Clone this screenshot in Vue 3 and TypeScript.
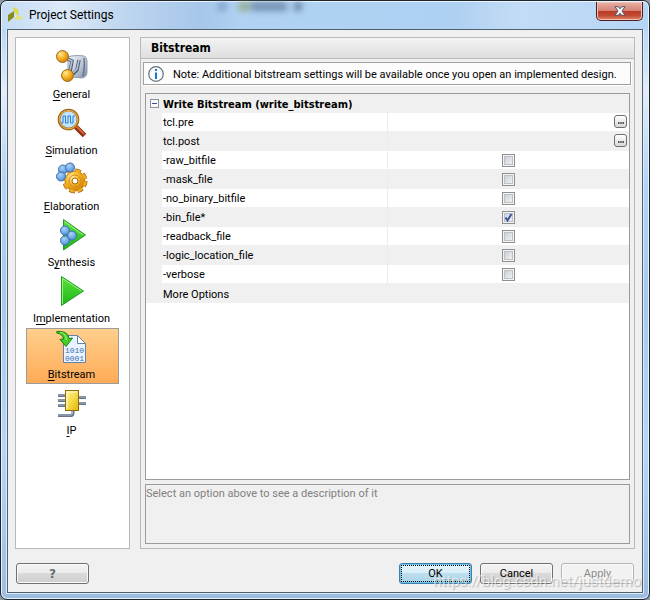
<script setup lang="ts">
import { ref } from 'vue'

interface NavItem {
  id: string
  before: string
  key: string
  after: string
}

interface Option {
  name: string
  kind: 'script' | 'flag' | 'text'
  value: boolean
}

const navItems: NavItem[] = [
  { id: 'general', before: '', key: 'G', after: 'eneral' },
  { id: 'simulation', before: '', key: 'S', after: 'imulation' },
  { id: 'elaboration', before: '', key: 'E', after: 'laboration' },
  { id: 'synthesis', before: 'S', key: 'y', after: 'nthesis' },
  { id: 'implementation', before: 'I', key: 'm', after: 'plementation' },
  { id: 'bitstream', before: '', key: 'B', after: 'itstream' },
  { id: 'ip', before: '', key: 'I', after: 'P' },
]

const active = ref('bitstream')
const expanded = ref(true)

const options = ref<Option[]>([
  { name: 'tcl.pre', kind: 'script', value: false },
  { name: 'tcl.post', kind: 'script', value: false },
  { name: '-raw_bitfile', kind: 'flag', value: false },
  { name: '-mask_file', kind: 'flag', value: false },
  { name: '-no_binary_bitfile', kind: 'flag', value: false },
  { name: '-bin_file*', kind: 'flag', value: true },
  { name: '-readback_file', kind: 'flag', value: false },
  { name: '-logic_location_file', kind: 'flag', value: false },
  { name: '-verbose', kind: 'flag', value: false },
  { name: 'More Options', kind: 'text', value: false },
])
</script>

<template>
  <div class="window">
    <header class="titlebar">
      <svg class="app-icon" viewBox="0 0 16 16" aria-hidden="true">
        <path d="M4 0 L10 2 L11 9 L7 6 Z" fill="#d9dc4a" />
        <path d="M0 8 L6 4 L6 10 L0 15 Z" fill="#8a8a1c" />
        <path d="M6 12 L10 8 L16 11 L11 13 Z" fill="#e4e37a" />
      </svg>
      <h1 class="title">Project Settings</h1>
      <span class="ghost" aria-hidden="true"></span>
      <button class="close" type="button" aria-label="Close">
        <svg viewBox="0 0 12 10" aria-hidden="true">
          <path d="M1 .7H4.3L6 2.8L7.7 .7H11L8 5L11 9.3H7.7L6 7.2L4.3 9.3H1L4 5Z" fill="#f6f6f6" stroke="#54546a" stroke-width="1" stroke-linejoin="round" />
        </svg>
      </button>
    </header>

    <div class="client">
      <div class="body">
        <nav class="sidebar">
          <button
            v-for="item in navItems"
            :key="item.id"
            type="button"
            class="nav-item"
            :class="{ selected: item.id === active }"
            @click="active = item.id"
          >
            <svg class="nav-icon" viewBox="0 0 32 32" aria-hidden="true">
              <defs>
                <radialGradient id="gold" cx=".35" cy=".3" r=".75">
                  <stop offset="0" stop-color="#ffeaa0" />
                  <stop offset=".45" stop-color="#f8b829" />
                  <stop offset="1" stop-color="#cf7c08" />
                </radialGradient>
                <radialGradient id="blue" cx=".4" cy=".3" r=".75">
                  <stop offset="0" stop-color="#a9d4fb" />
                  <stop offset="1" stop-color="#4f8cdc" />
                </radialGradient>
                <linearGradient id="green" x1="0" y1="0" x2="0" y2="1">
                  <stop offset="0" stop-color="#5be33a" />
                  <stop offset="1" stop-color="#1eb41a" />
                </linearGradient>
                <linearGradient id="steel" x1="0" y1="0" x2="1" y2="1">
                  <stop offset="0" stop-color="#f4f7fa" />
                  <stop offset=".6" stop-color="#b9c3d2" />
                  <stop offset="1" stop-color="#77859b" />
                </linearGradient>
                <linearGradient id="chip" x1="0" y1="0" x2="1" y2="1">
                  <stop offset="0" stop-color="#fff6a0" />
                  <stop offset=".5" stop-color="#f6d94a" />
                  <stop offset="1" stop-color="#e3b400" />
                </linearGradient>
              </defs>

              <g v-if="item.id === 'general'">
                <path d="M15 6Q23 5 28 6Q31 7 31 11V22Q31 27 26 28L17 27Q12 25 12 22V9Q12 6 15 6Z" fill="url(#steel)" stroke="#8e9bb0" />
                <path d="M28 8Q29 16 27 26" fill="none" stroke="#66758e" stroke-width="1.5" />
                <path d="M10 8L16 11L14 22M17 24L21 20L23 10" fill="none" stroke="#52617a" stroke-width="3.5" />
                <path d="M10 8L16 11L14 20M17 23L21 19L23 10" fill="none" stroke="#b7c3d4" stroke-width="1.5" />
                <circle cx="6.500" cy="6.500" r="6" fill="url(#gold)" stroke="#9c6a23" />
                <circle cx="11.500" cy="25.500" r="6" fill="url(#gold)" stroke="#9c6a23" />
              </g>
              <g v-else-if="item.id === 'simulation'">
                <path d="M20 21L28.500 29.500" stroke="#8c2c12" stroke-width="5" />
                <path d="M20 20L28 28" stroke="#d9643a" stroke-width="2" />
                <circle cx="12.500" cy="13.500" r="9.500" fill="#bfe4fd" stroke="#96601d" stroke-width="2.600" />
                <circle cx="12.500" cy="13.500" r="9.200" fill="none" stroke="#e8a63e" stroke-width="1.200" />
                <path d="M5 17H7V10H9.500V17H12V10H14.500V17H17V10H19" fill="none" stroke="#2d7fcd" stroke-width="1" />
              </g>
              <g v-else-if="item.id === 'elaboration'">
                <circle cx="19" cy="19" r="10.500" fill="none" stroke="#a86508" stroke-width="4" stroke-dasharray="5.500 2.750" />
                <circle cx="19" cy="19" r="10" fill="url(#gold)" stroke="#bd790b" />
                <circle cx="19" cy="19" r="10.500" fill="none" stroke="#f0ad22" stroke-width="2.500" stroke-dasharray="4.900 3.350" stroke-dashoffset="-.3" />
                <circle cx="19" cy="19" r="6" fill="none" stroke="#d58a0a" />
                <circle cx="19" cy="19" r="3" fill="#fff" stroke="#a86508" />
                <circle cx="7" cy="7.500" r="4.500" fill="url(#blue)" stroke="#416fa8" />
                <circle cx="14" cy="5.500" r="4.500" fill="url(#blue)" stroke="#416fa8" />
                <circle cx="5" cy="14.500" r="4.500" fill="url(#blue)" stroke="#416fa8" />
              </g>
              <g v-else-if="item.id === 'synthesis'">
                <path d="M7.500 1.500L29.500 17L7.500 32Z" fill="url(#green)" stroke="#239b24" stroke-linejoin="round" />
                <path d="M8.500 3.500L27 17" stroke="#a7f08e" />
                <circle cx="9" cy="12.500" r="4.500" fill="url(#blue)" stroke="#3971ad" />
                <circle cx="16" cy="17.500" r="4.500" fill="url(#blue)" stroke="#3971ad" />
                <circle cx="9" cy="22.500" r="4.500" fill="url(#blue)" stroke="#3971ad" />
              </g>
              <g v-else-if="item.id === 'implementation'">
                <path d="M5.500 2.500L27.500 17L5.500 31.500Z" fill="url(#green)" stroke="#239b24" stroke-linejoin="round" />
                <path d="M6.500 30V4.500L25.500 17" fill="none" stroke="#95f078" />
              </g>
              <g v-else-if="item.id === 'bitstream'">
                <path d="M7.500 5.500H21L29.500 14V32.500H7.500Z" fill="#e8f4ff" stroke="#6482ab" />
                <path d="M21.500 5.500V13.500H29.500Z" fill="#fff" stroke="#6482ab" />
                <text class="bits" x="18.500" y="23" text-anchor="middle">1010</text>
                <text class="bits" x="18.500" y="31" text-anchor="middle">0001</text>
                <path d="M.8 1.500Q12 .5 13 8.500L16.500 8L10 16.500L4 9.500L7.500 9Q7 4 .8 3Z" fill="#42cf26" stroke="#197c15" stroke-linejoin="round" />
                <path d="M4 2.300Q10 3 10.500 10" fill="none" stroke="#aef58a" />
              </g>
              <g v-else>
                <path d="M2 9.500H10M2 14.500H10M2 19.500H10M22 11.500H30M22 17.500H30M2 29.500H15Q17 29.500 17 27V24" fill="none" stroke="#65758a" stroke-width="3" />
                <path d="M2 9H10M2 14H10M2 19H10M22 11H30M22 17H30M2 29H15Q16.500 29 16.500 27V24" fill="none" stroke="#a9b7c7" />
                <rect x="9.500" y="4.500" width="13" height="20" fill="url(#chip)" stroke="#8e6a0a" />
                <path d="M11 23V6H21" fill="none" stroke="#fffbd0" />
              </g>
            </svg>
            <span class="nav-label">{{ item.before }}<u>{{ item.key }}</u>{{ item.after }}</span>
          </button>
        </nav>

        <main class="panel">
          <h2 class="panel-title">Bitstream</h2>
          <p class="note">
            <svg class="info" viewBox="0 0 16 16" aria-hidden="true">
              <circle cx="8" cy="8" r="7.300" fill="#f8fafb" stroke="#62717c" stroke-width="1.200" />
              <path d="M7 3H9V5H7ZM7 6.500H9V13H7Z" fill="#1878c4" />
            </svg>
            <span>Note: Additional bitstream settings will be available once you open an implemented design.</span>
          </p>

          <section class="options">
            <table class="grid">
              <colgroup>
                <col class="gutter" />
                <col class="names" />
                <col />
              </colgroup>
              <thead>
                <tr>
                  <th class="toggle-cell">
                    <button class="toggle" type="button" aria-label="Collapse" @click="expanded = !expanded">
                      <svg viewBox="0 0 9 9" aria-hidden="true">
                        <rect x=".5" y=".5" width="8" height="8" fill="#f8f8f8" stroke="#8a929c" />
                        <path d="M2 4.500H7" stroke="#3550a0" />
                        <path v-if="!expanded" d="M4.500 2V7" stroke="#3550a0" />
                      </svg>
                    </button>
                  </th>
                  <th class="group" colspan="2">Write Bitstream (write_bitstream)</th>
                </tr>
              </thead>
              <tbody v-if="expanded">
                <tr v-for="(opt, i) in options" :key="opt.name">
                  <td></td>
                  <td class="name"><label :for="`opt-${i}`">{{ opt.name }}</label></td>
                  <td class="value" :class="opt.kind">
                    <button v-if="opt.kind === 'script'" :id="`opt-${i}`" class="browse" type="button">
                      <svg viewBox="0 0 8 2" aria-hidden="true">
                        <path d="M0 0H2V2H0ZM3 0H5V2H3ZM6 0H8V2H6Z" fill="#222" />
                      </svg>
                    </button>
                    <span v-else-if="opt.kind === 'flag'" class="check">
                      <input :id="`opt-${i}`" v-model="opt.value" type="checkbox" />
                      <svg v-if="opt.value" viewBox="0 0 13 13" aria-hidden="true">
                        <path d="M3.500 6.500L5.500 9.500L9.500 3" fill="none" stroke="#3a57a5" stroke-width="2" />
                      </svg>
                    </span>
                  </td>
                </tr>
              </tbody>
            </table>
          </section>

          <p class="description">Select an option above to see a description of it</p>
        </main>
      </div>

      <footer class="actions">
        <button class="btn help" type="button">?</button>
        <button class="btn ok" type="button"><span>OK</span></button>
        <button class="btn" type="button">Cancel</button>
        <button class="btn" type="button" disabled>Apply</button>
      </footer>
    </div>
    <span class="watermark">https://blog.csdn.net/justdemo</span>
  </div>
</template>

<style>
body {
  margin: 0;
  background: #8d98a5;
}
</style>

<style scoped>
* {
  box-sizing: border-box;
}

.window {
  position: relative;
  display: flex;
  flex-direction: column;
  height: 100vh;
  padding: 0 6px 6px;
  border: 1px solid #20262e;
  border-radius: 7px;
  background: linear-gradient(to bottom, #abc9ea 0, #b9d8f8 30px, #e3edf8 90px, #b2d4f7 180px, #a5c9ee 300px, #b5d6f8 450px, #9dbde0 100%);
  box-shadow: inset 0 0 0 1px #e6f2fd;
  font-family: Roboto, sans-serif;
  font-size: 11px;
  line-height: 14px;
  color: #000;
}

button {
  font: inherit;
  color: inherit;
}

.titlebar {
  position: relative;
  display: flex;
  flex: none;
  align-items: flex-start;
  height: 28px;
  margin: 0 -5px;
  padding: 0 0 0 6px;
  border-top: 1px solid #eaf4fe;
  border-radius: 6px 6px 0 0;
  background: linear-gradient(to right, #c5dcf5 0, #dce9f7 60px, #bcd4ef 130px, #a6c6ea 200px, #b0d2f3 240px, #aed0f2 70%, #c3dcf6 80%, #b5d5f6 100%);
}

.app-icon {
  width: 16px;
  height: 16px;
  margin: 5px 5px 0 0;
}

.title {
  margin: 5px 0 0;
  font-size: 12px;
  font-weight: 400;
  line-height: 16px;
}

.ghost {
  position: absolute;
  left: 216px;
  top: 0;
  width: 86px;
  height: 9px;
  background: linear-gradient(to right, #6f91bc 0, #6f91bc 8px, transparent 9px, transparent 20px, #8b9d67 21px, #8b9d67 31px, transparent 32px, #5b7694 34px, #5b7694 68px, transparent 70px, transparent 76px, #435f7c 77px, #435f7c 83px, transparent 84px);
  filter: blur(3px);
  opacity: 0.7;
}

.close {
  display: flex;
  align-items: center;
  justify-content: center;
  width: 47px;
  height: 19px;
  margin: 0 5px 0 auto;
  padding: 0;
  border: 1px solid #561b1b;
  border-top: 0;
  border-radius: 0 0 5px 5px;
  background: linear-gradient(#e7b2a5 0, #d58376 48%, #b83a25 50%, #c14a32 75%, #df8b70 100%);
  box-shadow: inset 0 0 0 1px #edc1b6;
}

.close svg {
  width: 12px;
  height: 10px;
}

.client {
  display: flex;
  flex: 1;
  flex-direction: column;
  min-height: 0;
  padding: 7px 7px 8px;
  border: 1px solid #4f606f;
  background: #f0f0f0;
  box-shadow: 0 0 0 1px #dcebfa;
}

.body {
  display: flex;
  flex: 1;
  gap: 10px;
  min-height: 0;
}

.sidebar {
  flex: none;
  width: 115px;
  padding: 10px;
  border: 1px solid #b9b9b9;
  background: #fff;
}

.nav-item {
  display: flex;
  flex-direction: column;
  align-items: center;
  width: 100%;
  height: 56px;
  padding: 1px 2px 0 0;
  border: 1px solid transparent;
  background: none;
}

.nav-item.selected {
  border-color: #9c9c9c;
  background: linear-gradient(#ffcf8c, #ffab57);
}

.nav-icon {
  flex: none;
  width: 32px;
  height: 32px;
  overflow: visible;
}

.nav-label {
  margin-top: 6px;
  white-space: nowrap;
}

.nav-label u {
  text-decoration-thickness: 1px;
  text-underline-offset: 2px;
  text-decoration-skip-ink: none;
}

.bits {
  font-family: "Liberation Mono", monospace;
  font-size: 8px;
  fill: #3a6caf;
}

.panel {
  display: flex;
  flex: 1;
  flex-direction: column;
  min-width: 0;
  padding-bottom: 4px;
  border: 1px solid #b9b9b9;
}

.panel-title,
.grid .group {
  font-family: "DejaVu Sans Condensed", "DejaVu Sans", sans-serif;
  font-weight: 700;
}

.panel-title {
  margin: 0;
  padding: 0 10px;
  height: 21px;
  border-bottom: 1px solid #b9b9b9;
  background: linear-gradient(#f3f3f3, #dedede);
  font-size: 12px;
  line-height: 20px;
}

.note {
  display: flex;
  flex: none;
  align-items: center;
  gap: 9px;
  height: 23px;
  margin: 3px 3px 8px 2px;
  padding: 0 4px;
  border: 1px solid #a0a0a0;
  background: #fcfcfc;
  box-shadow: 1px 1px 0 #fff;
  white-space: nowrap;
}

.note span {
  padding-top: 2px;
}

.info {
  flex: none;
  width: 16px;
  height: 16px;
}

.options {
  flex: 1;
  min-height: 0;
  margin: 0 4px 4px;
  border: 1px solid #9b9b9b;
  background: #fff;
}

.grid {
  width: 100%;
  border-collapse: separate;
  border-spacing: 0;
  table-layout: fixed;
  background: #f0f0f0;
}

.gutter {
  width: 16px;
}

.names {
  width: 226px;
}

.grid th,
.grid td {
  height: 19px;
  padding: 0;
  line-height: 14px;
  text-align: left;
  vertical-align: middle;
}

.grid th {
  height: 18px;
}

.grid td {
  border-top: 1px solid #f0f0f0;
}

.grid .group {
  padding: 4px 0 0 1px;
}

.toggle-cell {
  font-size: 0;
}

.toggle {
  display: block;
  width: 9px;
  height: 9px;
  margin: 0 0 0 4px;
  padding: 0;
  border: 0;
  background: none;
}

.toggle svg {
  display: block;
}

.grid .name {
  padding: 2px 0 0 1px;
  border-right: 1px solid #ececec;
}

.grid tbody tr:nth-child(odd) td:not(:first-child) {
  background: #fff;
  border-top-color: #f0f0f0;
}

.grid tbody tr:last-child td {
  height: 20px;
  border-right: 0;
}

.browse {
  display: flex;
  align-items: center;
  justify-content: center;
  width: 13px;
  height: 13px;
  margin: 0 2px 2px auto;
  padding: 3px 0 0;
  border: 1px solid #6f6f6f;
  border-radius: 3px;
  background: linear-gradient(#fff, #d8d8d8);
}

.browse svg {
  width: 6px;
  height: 2px;
}

.check {
  position: relative;
  display: block;
  width: 13px;
  height: 13px;
  margin: 0 auto;
}

.check input {
  display: block;
  width: 13px;
  height: 13px;
  margin: 0;
  appearance: none;
  border: 1px solid #8e8f8f;
  background: linear-gradient(135deg, #c3c8d0, #f8f8f8);
  box-shadow: inset 0 0 0 1px #f4f4f4, inset 0 0 0 2px #bcc1c8;
}

.check svg {
  position: absolute;
  inset: 0;
  pointer-events: none;
}

.description {
  flex: none;
  height: 60px;
  margin: 0 4px;
  padding: 2px 0;
  border: 1px solid #9b9b9b;
  color: #808080;
}

.actions {
  display: flex;
  flex: none;
  gap: 8px;
  margin-top: 14px;
  padding: 0 1px;
}

.btn {
  width: 73px;
  height: 21px;
  padding: 0;
  border: 1px solid #707070;
  border-radius: 3px;
  background: linear-gradient(#f3f3f3 0, #ebebeb 48%, #dadada 50%, #cecece 100%);
  box-shadow: inset 0 0 0 1px #fafafa;
}

.btn:disabled {
  border-color: #b5b5b5;
  background: #f2f2f2;
  color: #8a8a8a;
}

.help {
  margin-right: auto;
  color: #5f6e70;
  font-family: "DejaVu Sans", sans-serif;
  font-size: 12px;
  font-weight: 700;
}

.ok {
  padding: 1px;
  border-color: #3c7fb1;
  background: linear-gradient(#e8f5fb 0, #d6edf8 48%, #bddfee 50%, #a9d3e6 100%);
  box-shadow: inset 0 0 0 1px #6cc5e8;
}

.ok span {
  display: block;
  height: 17px;
  border: 1px dotted #000;
  line-height: 15px;
}

.watermark {
  position: absolute;
  right: 8px;
  bottom: 8px;
  font-size: 15px;
  line-height: 20px;
  color: rgba(255, 255, 255, 0.6);
  text-shadow: 1px 1px 1px rgba(90, 90, 90, 0.4);
  pointer-events: none;
}
</style>
